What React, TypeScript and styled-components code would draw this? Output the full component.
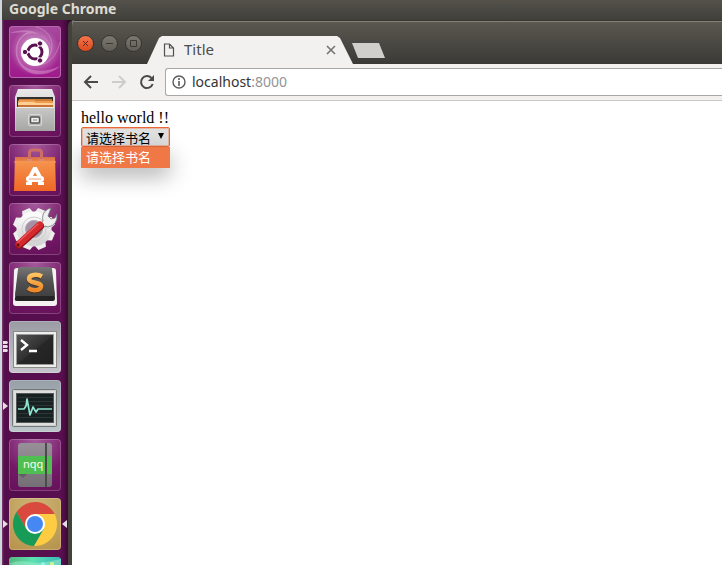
import React, { useState } from "react";
import styled, { createGlobalStyle } from "styled-components";

const GlobalStyle = createGlobalStyle`
  * { box-sizing: border-box; }
  html, body { margin: 0; padding: 0; }
  body { background: #fff; font-family: "Noto Sans", "Noto Sans CJK SC", sans-serif; }
`;

const Desktop = styled.div`
  display: flex;
  height: 100vh;
  overflow: hidden;
  background: linear-gradient(90deg, #cfd6dd, #929da7);
  padding-left: 2px;
`;

const Screen = styled.div`
  flex: 1;
  min-width: 0;
  display: flex;
  flex-direction: column;
`;

const TopPanel = styled.header`
  flex: none;
  height: 20px;
  padding-left: 7px;
  background: linear-gradient(#54524b, #403f3a);
  color: #dfdbd2;
  font-size: 14px;
  font-weight: 700;
  line-height: 17px;
`;

const Workspace = styled.div`
  flex: 1;
  min-height: 0;
  display: flex;
  background: #300a26;
`;

const Launcher = styled.nav`
  flex: none;
  width: 66px;
  padding: 6px 7px 0;
  display: flex;
  flex-direction: column;
  gap: 7px;
  overflow: hidden;
  background: linear-gradient(90deg, #7d4674 0, #540e4c 2px, #590e50 60px, #3d0835);
`;

const Tile = styled.button<{ $tint: string; $edge?: string }>`
  position: relative;
  flex: none;
  width: 52px;
  height: 52px;
  padding: 0;
  border: 0;
  border-radius: 4px;
  background: ${(p) => p.$tint};
  box-shadow: inset 0 0 0 1px ${(p) => p.$edge ?? "rgba(255, 255, 255, 0.2)"};

  > svg { display: block; }
`;

const Mark = styled.svg<{ $side: "left" | "right" }>`
  position: absolute;
  top: 20px;
  ${(p) => p.$side}: -6px;
`;

const Browser = styled.main`
  flex: 1;
  min-width: 0;
  display: flex;
  flex-direction: column;
  border-left: 4px solid #42413c;
  border-top-left-radius: 6px;
  background: #fff;
  overflow: hidden;
`;

const TitleBar = styled.div`
  flex: none;
  height: 44px;
  display: flex;
  align-items: flex-end;
  border-top: 1px solid #37352f;
  box-shadow: inset 0 1px 0 #85837b;
  background: linear-gradient(#5a5850, #3b3a36);
`;

const WindowButtons = styled.div`
  display: flex;
  gap: 7px;
  padding: 0 5px 12px;
`;

const WindowButton = styled.button<{ $close?: boolean }>`
  width: 17px;
  height: 17px;
  padding: 0;
  border: 1px solid #35342f;
  border-radius: 50%;
  background: ${(p) =>
    p.$close ? "linear-gradient(#f4744c, #dc4a1e)" : "linear-gradient(#7b796f, #605e56)"};

  svg { display: block; }
`;

const Tab = styled.div`
  display: flex;
  align-items: center;
  width: 206px;
  height: 28px;
  padding: 0 16px;
  background: #f2f1f0;
  clip-path: polygon(0 100%, 12px 2px, 15px 0, 190px 0, 193px 2px, 100% 100%);
  color: #4c4c4c;
  font-size: 15px;
  line-height: 20px;
`;

const TabTitle = styled.span`
  flex: 1;
  padding: 0 0 2px 9px;
`;

const IconButton = styled.button`
  display: grid;
  place-items: center;
  width: 28px;
  height: 28px;
  padding: 0;
  border: 0;
  background: none;
`;

const CloseTab = styled(IconButton)`
  width: 12px;
  height: 12px;
`;

const NewTab = styled.button`
  width: 34px;
  height: 15px;
  margin: 0 0 6px -1px;
  padding: 0;
  border: 0;
  background: #d0cfcb;
  clip-path: polygon(0 0, 27px 0, 33px 100%, 6px 100%);
`;

const Toolbar = styled.div`
  flex: none;
  display: flex;
  align-items: center;
  height: 37px;
  padding-left: 5px;
  border-bottom: 1px solid #c8c8c8;
  background: #f2f1f0;
`;

const AddressBar = styled.div`
  flex: 1;
  display: flex;
  align-items: center;
  gap: 6px;
  height: 28px;
  margin-left: 4px;
  padding-left: 6px;
  border: 1px solid #a9a8a6;
  border-right: 0;
  border-radius: 3px 0 0 3px;
  background: #fff;
`;

const Address = styled.a`
  color: #333;
  font-size: 14px;
  line-height: 20px;
  text-decoration: none;
`;

const Port = styled.span`
  color: #949494;
`;

const Page = styled.section`
  flex: 1;
  padding: 8px 9px;
  color: #000;
  font-family: "Liberation Serif", "Noto Sans CJK SC", serif;
  font-size: 16px;
  line-height: 18px;
`;

const Picker = styled.div`
  position: relative;
  width: 89px;
`;

const BookSelect = styled.select`
  display: block;
  width: 100%;
  height: 20px;
  padding: 1px 4px 0;
  appearance: none;
  border: 1px solid #e8683a;
  border-radius: 2px;
  outline: none;
  box-shadow: inset 0 0 0 1px #e9b5a3;
  background: #dfdfdf;
  color: #000;
  font-family: "Noto Sans CJK SC", sans-serif;
  font-size: 13px;
  line-height: 18px;
`;

const Arrow = styled.svg`
  position: absolute;
  top: 6px;
  right: 6px;
  pointer-events: none;
`;

const Options = styled.ul`
  position: absolute;
  top: 20px;
  left: 0;
  right: 0;
  margin: 0;
  padding: 0;
  list-style: none;
  box-shadow: 0 8px 22px rgba(0, 0, 0, 0.32);
`;

const Option = styled.li`
  height: 21px;
  padding-left: 5px;
  background: #f07746;
  color: #fff;
  font-family: "Noto Sans CJK SC", sans-serif;
  font-size: 13px;
  line-height: 20px;
`;

const Icon = ({ children }: { children: React.ReactNode }) => (
  <svg width="52" height="52" viewBox="0 0 52 52" fill="none" aria-hidden="true">
    {children}
  </svg>
);

const UbuntuIcon = () => (
  <Icon>
    <defs>
      <radialGradient id="swirl"><stop stopColor="#fff" stopOpacity=".65" /><stop offset="1" stopColor="#fff" stopOpacity="0" /></radialGradient>
    </defs>
    <circle cx="26" cy="25" r="25" fill="url(#swirl)" />
    <path d="M1 7C18 0 38 6 43 25C41 13 31 5 19 8C9 11 6 25 10 33C15 46 35 48 51 40C38 53 14 51 8 33C4 22 9 11 18 6Z" fill="#e2a8d8" opacity=".45" />
    <path d="M51 16C47 33 36 42 22 38C34 39 43 31 43 20C43 10 36 3 27 1" stroke="#efc4e8" opacity=".35" />
    <circle cx="26" cy="26" r="14" fill="#fff" />
    <circle cx="26" cy="26" r="7" stroke="#5b1250" strokeWidth="3" />
    <path d="m26 26 5-9M26 26H15m11 0 5 9" stroke="#fff" strokeWidth="1.4" />
    <g fill="#5b1250" stroke="#fff"><circle cx="31" cy="17.5" r="2.7" /><circle cx="16" cy="26" r="2.7" /><circle cx="31" cy="34.5" r="2.7" /></g>
  </Icon>
);

const FilesIcon = () => (
  <Icon>
    <defs>
      <linearGradient id="lid" x1="0" y1="0" x2="0" y2="1"><stop stopColor="#e8e9e8" /><stop offset="1" stopColor="#b9bab8" /></linearGradient>
      <linearGradient id="drawer" x1="0" y1="0" x2="0" y2="1"><stop stopColor="#c8c9c7" /><stop offset="1" stopColor="#a6a7a5" /></linearGradient>
    </defs>
    <path d="M9 4h34l3 8v34H6V12Z" fill="url(#lid)" />
    <path d="M8 12h36v11H8Z" fill="#33312e" />
    <path d="M10 14h33v2H10Z" fill="#c97b38" />
    <path d="m9 16 1-1h15l2 1h17v7H9Z" fill="#ee9b50" />
    <path d="m9 18 2-1h14l2 1h17v5H9Z" fill="#ffcf93" />
    <path d="M9 20h35v3H9Z" fill="#c77337" />
    <path d="M7 22h38v24H7Z" fill="url(#drawer)" />
    <path d="M7 22.5h38" stroke="#eee" />
    <rect x="19.5" y="29.5" width="13" height="11" rx="1" fill="#bbbcba" stroke="#d8d8d7" />
    <rect x="21.5" y="32" width="9" height="6" rx="1" fill="#eee" stroke="#555" strokeWidth="1.5" />
    <path d="M24 35h4" stroke="#888" />
  </Icon>
);

const SoftwareIcon = () => (
  <Icon>
    <defs><linearGradient id="bag" x1="0" y1="0" x2="0" y2="1"><stop stopColor="#d96f48" /><stop offset=".2" stopColor="#f5904a" /><stop offset="1" stopColor="#ef6826" /></linearGradient></defs>
    <path d="M6 13h40l1 34H5Z" fill="url(#bag)" />
    <path d="M5 18h42" stroke="#f9a160" />
    <path d="M20.5 16V9q0-3 3-3h6q3 0 3 3v7" stroke="#cf6e64" strokeWidth="3" />
    <path d="M18 16h5m7 0h5" stroke="#df8a70" strokeWidth="2" />
    <path d="m20 35 6-11 6 11" stroke="#fff" strokeWidth="4" strokeLinejoin="bevel" />
    <path d="M17 39.5h6m6 0h6" stroke="#fff" strokeWidth="3" />
    <rect x="17" y="32" width="18" height="6" rx="3" fill="#fff" />
    <path d="M20 35h12" stroke="#f3a07a" />
  </Icon>
);

const SettingsIcon = () => (
  <Icon>
    <defs>
      <linearGradient id="gear" x1="0" y1="0" x2="0" y2="1"><stop stopColor="#fafafa" /><stop offset="1" stopColor="#d4d4d4" /></linearGradient>
    </defs>
    <g fill="#eeeeec">
      {[22, 67, 112, 157, 202, 247, 292, 337].map((angle) => (
        <path key={angle} d="M19 11 21 5h8l2 6Z" transform={`rotate(${angle} 25 26)`} />
      ))}
    </g>
    <circle cx="25" cy="26" r="13" stroke="url(#gear)" strokeWidth="9" />
    <circle cx="25" cy="26" r="12" stroke="#d0cdd0" />
    <circle cx="25" cy="26" r="8.5" fill="#a58fa3" stroke="#b5b0b4" />
    <path d="m26 27 8-9q-2-8 5-12l3-1-3 8 3 3 4-1 2-4q1 11-9 13l-3-1-7 8Z" fill="#f0f0f0" stroke="#777" strokeWidth=".8" />
    <path d="m10 42 21-19" stroke="#8c1318" strokeWidth="8" strokeLinecap="round" />
    <path d="m10 41 21-19" stroke="#d6292e" strokeWidth="7" strokeLinecap="round" />
    <path d="m9 39 20-18" stroke="#e85b5f" strokeWidth="1.5" strokeLinecap="round" />
    <circle cx="9" cy="42" r="1.5" fill="#5c1016" />
  </Icon>
);

const sublimeMark = "M33 14.5c-5-3-13-2-13 2.5 0 5 13 2.5 12 8-1 4-9 4-13 1";

const SublimeIcon = () => (
  <Icon>
    <defs>
      <linearGradient id="key" x1="0" y1="0" x2="0" y2="1"><stop stopColor="#777" /><stop offset=".5" stopColor="#515151" /><stop offset="1" stopColor="#414141" /></linearGradient>
      <linearGradient id="ess" x1="0" y1="0" x2="0" y2="1"><stop stopColor="#ffc261" /><stop offset="1" stopColor="#ed8829" /></linearGradient>
    </defs>
    <path d="M8 6h36q3 0 3 3l1 32q0 3-3 3H7q-3 0-3-3L5 9q0-3 3-3Z" fill="#f4f3f2" />
    <path d="M10 5h32l4 31q0 3-2 3H8q-3 0-2-3Z" fill="#242424" />
    <path d="M11 5h30q2 0 2 2l3 26q0 1-2 1H8q-2 0-2-1L9 7q0-2 2-2Z" fill="url(#key)" />
    <path d={sublimeMark} stroke="#43372c" strokeWidth="5" transform="translate(0 1)" />
    <path d={sublimeMark} stroke="url(#ess)" strokeWidth="4.5" />
  </Icon>
);

const TerminalIcon = () => (
  <Icon>
    <defs><linearGradient id="term" x1="0" y1="0" x2="1" y2="1"><stop stopColor="#555" /><stop offset=".5" stopColor="#303030" /><stop offset=".51" stopColor="#272727" /><stop offset="1" stopColor="#202020" /></linearGradient></defs>
    <rect x="4.5" y="10.5" width="43" height="36" fill="#eeeeec" stroke="#8a8b89" />
    <rect x="7.5" y="13.5" width="37" height="30" fill="url(#term)" stroke="#999" />
    <path d="m12 19 6 5-6 5m8 1h8" stroke="#fff" strokeWidth="2.4" />
  </Icon>
);

const MonitorIcon = () => (
  <Icon>
    <rect x="3.5" y="9.5" width="44" height="37" rx="1" fill="#cccfcd" stroke="#72777a" />
    <rect x="5" y="11" width="41" height="34" fill="#dedfdd" />
    <rect x="7.5" y="13.5" width="37" height="29" fill="#172122" stroke="#52585a" />
    <path d="M9 17.5h35m-35 4h35m-35 4h35m-35 8h35m-35 4h35" stroke="#2b3635" />
    <path d="M9 29h6l2-3 1-7 3 16 3-8 3 5 2-3h14" stroke="#8de4d1" strokeWidth="1.7" strokeLinejoin="round" />
  </Icon>
);

const NotebookIcon = () => (
  <Icon>
    <defs><linearGradient id="book" x1="0" y1="0" x2="0" y2="1"><stop stopColor="#989098" /><stop offset="1" stopColor="#746f74" /></linearGradient></defs>
    <rect x="9" y="4" width="34" height="44" rx="3" fill="url(#book)" />
    <path d="M9 17h34v18H9Z" fill="#50bf51" />
    <path d="M37 4v44" stroke="#494d49" strokeWidth="2" />
    <path d="m18 35-4 4-5-4" fill="#665c66" />
    <text x="14" y="29" fill="#f7fff7" fontFamily="Noto Sans, sans-serif" fontSize="11">nqq</text>
  </Icon>
);

const chromeBlade = "M26 16H45.6A22 22 0 0 0 7.55 14.02L17.34 31L26 26Z";

const ChromeIcon = () => (
  <Icon>
    <path d={chromeBlade} fill="#da493d" />
    <path d={chromeBlade} fill="#fdcc43" transform="rotate(120 26 26)" />
    <path d={chromeBlade} fill="#179b57" transform="rotate(240 26 26)" />
    <circle cx="26" cy="26" r="10" fill="#fff" />
    <circle cx="26" cy="26" r="8" fill="#4587f3" />
  </Icon>
);

const WallpaperIcon = () => (
  <Icon>
    <defs><linearGradient id="teal"><stop stopColor="#54b77d" /><stop offset=".45" stopColor="#5ce0b2" /><stop offset="1" stopColor="#39b7ba" /></linearGradient></defs>
    <rect width="52" height="52" rx="4" fill="url(#teal)" />
    <path d="M0 7C15 0 26 9 38 5L52 2V10L30 12Z" fill="#a1f2cf" opacity=".5" />
    <circle cx="34" cy="7" r="2" fill="#8ff4e6" /><circle cx="43" cy="7" r="2" fill="#d4f484" />
  </Icon>
);

type App = {
  name: string;
  icon: React.FC;
  tint: string;
  edge?: string;
  marks?: "windows" | "running" | "focused";
};

const purple = "radial-gradient(circle at 50% 0, #a65b9d, #751967 60%, #641158)";
const silver = "linear-gradient(#9b9ba4, #c6c6cc)";

const apps: App[] = [
  { name: "Search", icon: UbuntuIcon, tint: "linear-gradient(#a64a9d, #9f198c)", edge: "#b765ac" },
  { name: "Files", icon: FilesIcon, tint: purple },
  { name: "Software", icon: SoftwareIcon, tint: purple },
  { name: "System Settings", icon: SettingsIcon, tint: purple },
  { name: "Sublime Text", icon: SublimeIcon, tint: purple },
  { name: "Terminal", icon: TerminalIcon, tint: silver, marks: "windows" },
  { name: "System Monitor", icon: MonitorIcon, tint: "linear-gradient(#97a0a7, #bdc6ca)", marks: "running" },
  { name: "Notepadqq", icon: NotebookIcon, tint: purple },
  { name: "Google Chrome", icon: ChromeIcon, tint: "radial-gradient(circle at 50% 20%, #cdb577, #b6924a)", marks: "focused" },
  { name: "Wallpaper", icon: WallpaperIcon, tint: "#56c58e" },
];

const AppTile = ({ app }: { app: App }) => {
  const Drawing = app.icon;
  return (
    <Tile $tint={app.tint} $edge={app.edge} aria-label={app.name}>
      <Drawing />
      {app.marks === "windows" && (
        <Mark $side="left" width="5" height="12" fill="#e7dce5">
          <path d="M0 0h4l1 1.5L4 3H0Zm0 4h4l1 1.5L4 7H0Zm0 4h4l1 1.5L4 11H0Z" />
        </Mark>
      )}
      {(app.marks === "running" || app.marks === "focused") && (
        <Mark $side="left" width="6" height="12" fill="#e7dce5"><path d="m0 2 5 4-5 4Z" /></Mark>
      )}
      {app.marks === "focused" && (
        <Mark $side="right" width="6" height="12" fill="#e7dce5"><path d="M6 2 1 6l5 4Z" /></Mark>
      )}
    </Tile>
  );
};

const books = ["请选择书名"];

export default function App() {
  const [book, setBook] = useState(books[0]);
  return (
    <>
      <GlobalStyle />
      <Desktop>
        <Screen>
          <TopPanel>Google Chrome</TopPanel>
          <Workspace>
            <Launcher aria-label="Launcher">
              {apps.map((app) => <AppTile key={app.name} app={app} />)}
            </Launcher>
            <Browser>
              <TitleBar>
                <WindowButtons>
                  <WindowButton $close aria-label="Close window">
                    <svg width="15" height="15" stroke="#622b19"><path d="m5 5 5 5m0-5-5 5" /></svg>
                  </WindowButton>
                  <WindowButton aria-label="Minimize window">
                    <svg width="15" height="15" stroke="#393832"><path d="M4 7.5h7" /></svg>
                  </WindowButton>
                  <WindowButton aria-label="Maximize window">
                    <svg width="15" height="15" fill="none" stroke="#393832"><path d="M4.5 4.5h6v6h-6Z" /></svg>
                  </WindowButton>
                </WindowButtons>
                <Tab>
                  <svg width="12" height="14" fill="none" stroke="#505050" strokeWidth="1.2" aria-hidden="true">
                    <path d="M1.5 1h5l4 4v8h-9Zm5 0v4h4" />
                  </svg>
                  <TabTitle>Title</TabTitle>
                  <CloseTab aria-label="Close tab">
                    <svg width="10" height="10" stroke="#737373" strokeWidth="1.6"><path d="m1 1 8 8m0-8-8 8" /></svg>
                  </CloseTab>
                </Tab>
                <NewTab aria-label="New tab" />
              </TitleBar>
              <Toolbar>
                <IconButton aria-label="Back">
                  <svg width="16" height="14" fill="none" stroke="#4a4a4a" strokeWidth="2"><path d="M15 7H2m6-6L2 7l6 6" /></svg>
                </IconButton>
                <IconButton aria-label="Forward" disabled>
                  <svg width="16" height="14" fill="none" stroke="#cecdcc" strokeWidth="2"><path d="M1 7h13M8 1l6 6-6 6" /></svg>
                </IconButton>
                <IconButton aria-label="Reload">
                  <svg width="16" height="16" fill="none" stroke="#4a4a4a" strokeWidth="2">
                    <path d="M13.7 10A6 6 0 1 1 12.5 4" /><path d="M15 1v6H9Z" fill="#4a4a4a" stroke="none" />
                  </svg>
                </IconButton>
                <AddressBar>
                  <svg width="14" height="14" fill="none" stroke="#5b5b5b" strokeWidth="1.4" aria-hidden="true">
                    <circle cx="7" cy="7" r="6" /><path d="M7 6v5M7 3v2" strokeWidth="1.6" />
                  </svg>
                  <Address href="#">localhost<Port>:8000</Port></Address>
                </AddressBar>
              </Toolbar>
              <Page>
                hello world !!
                <Picker>
                  <BookSelect aria-label="书名" value={book} onChange={(e) => setBook(e.target.value)}>
                    {books.map((b) => <option key={b}>{b}</option>)}
                  </BookSelect>
                  <Arrow width="6" height="7" aria-hidden="true"><path d="M0 0h6L3 6Z" /></Arrow>
                  <Options role="listbox" aria-label="书名">
                    {books.map((b) => (
                      <Option key={b} role="option" aria-selected={b === book}>{b}</Option>
                    ))}
                  </Options>
                </Picker>
              </Page>
            </Browser>
          </Workspace>
        </Screen>
      </Desktop>
    </>
  );
}
